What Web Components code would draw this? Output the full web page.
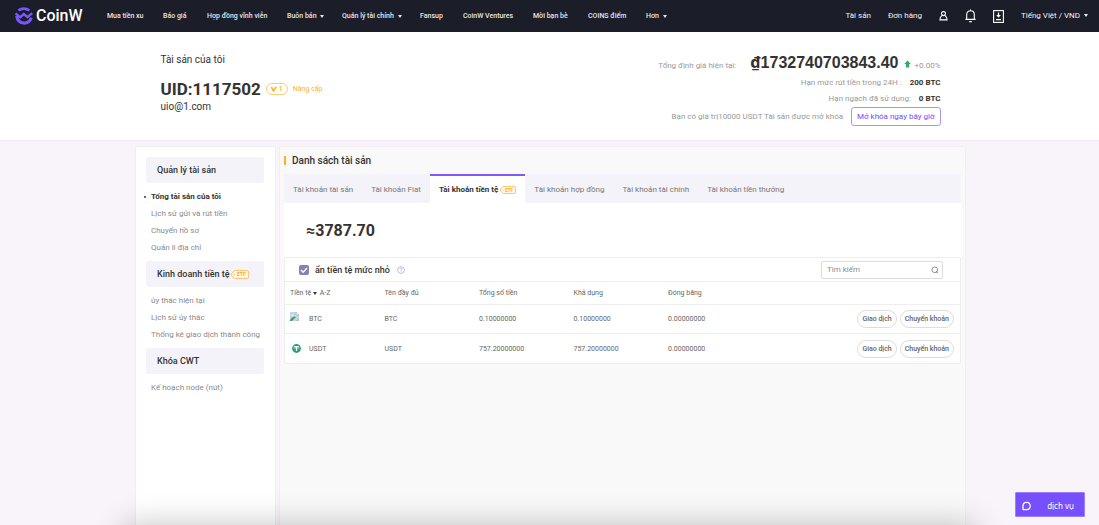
<!DOCTYPE html>
<html lang="vi">
<head>
<meta charset="utf-8">
<title>CoinW - Tài sản của tôi</title>
<style>
html{height:100%}
body{margin:0;min-height:100vh;display:flex;flex-direction:column;background:#f9f4f9;color:#333;font-family:Roboto,"Liberation Sans",sans-serif;font-size:8px}
main{flex:1;display:flex;flex-direction:column}
</style>
</head>
<body>
<cw-header></cw-header>
<main>
<cw-summary></cw-summary>
<cw-content>
  <cw-sidebar slot="side">
    <cw-group><span slot="title">Quản lý tài sản</span>
      <cw-link current>Tổng tài sản của tôi</cw-link><cw-link>Lịch sử gửi và rút tiền</cw-link><cw-link>Chuyển hồ sơ</cw-link><cw-link>Quản lí địa chỉ</cw-link>
    </cw-group>
    <cw-group><span slot="title">Kinh doanh tiền tệ</span><cw-etf slot="title"></cw-etf>
      <cw-link>ủy thác hiện tại</cw-link><cw-link>Lịch sử ủy thác</cw-link><cw-link>Thống kê giao dịch thành công</cw-link>
    </cw-group>
    <cw-group><span slot="title">Khóa CWT</span>
      <cw-link>Kế hoạch node (nút)</cw-link>
    </cw-group>
  </cw-sidebar>
  <cw-assets></cw-assets>
</cw-content>
</main>
<cw-shade></cw-shade>
<cw-service>dịch vụ</cw-service>
<script>
function define(name, html) {
  const t = document.createElement('template');
  t.innerHTML = html;
  customElements.define(name, class extends HTMLElement {
    constructor() {
      super();
      this.attachShadow({mode: 'open'}).append(t.content.cloneNode(true));
    }
  });
}

define('cw-caret', `<style>:host{display:inline-block;width:0;height:0;border:2px solid transparent;border-top:3px solid currentColor;border-bottom:0;margin-left:2px;vertical-align:middle}</style>`);

define('cw-etf', `<style>:host{display:inline-block;width:18px;height:9px}svg{display:block;width:100%;height:100%}</style>
<svg viewBox="0 0 18 9"><path d="M3.4 .6H16.6Q17.4 .6 17.4 1.4V7.6Q17.4 8.4 16.6 8.4H3.4L.6 5.6V3.4Z" fill="#fffaf0" stroke="#ffb84d" stroke-width=".9"/><circle cx="3.2" cy="4.5" r=".7" fill="#ffb84d"/><text x="6" y="6.3" font-family="Roboto,sans-serif" font-weight="700" font-size="5" fill="#ffa822">ETF</text></svg>`);

define('cw-header', `<style>
:host{display:flex;align-items:center;height:32px;background:#1b1d29;color:#fff;padding:0 11px 0 15px;box-sizing:border-box}
a{color:inherit;text-decoration:none}
.logo{display:flex;align-items:center;gap:3px;width:92px;flex:none;font:500 16px/20px Roboto,sans-serif}
.logo svg{width:18px;height:18px}
nav{display:grid;grid-template-columns:56px 44px 80px 55px 78px 43px 70px 55px 58px auto;font-weight:500;font-size:7px;line-height:10px;white-space:nowrap;color:#e6e6ea}
.tools{margin-left:auto;display:flex;align-items:center;gap:17px;font-size:8px;line-height:10px;white-space:nowrap;color:#f2f2f5}
button{all:unset;display:block}button svg{display:block}
</style>
<a class="logo" href="#"><svg viewBox="0 0 18 18" fill="none" stroke="#7b54ff"><path d="M3.4 3.4Q8.8 -.2 14.4 3.4" stroke-width="2.6"/><path d="M.6 6.4 5.2 10.4 8.8 6.8 12.4 10.2 17.2 6.2" stroke-width="2.4" stroke-linejoin="round"/><path d="M1.8 8.8C2.4 18 14.6 18.2 16.2 10.6" stroke-width="3.2"/></svg><span>CoinW</span></a>
<nav><a href="#">Mua tiền xu</a><a href="#">Báo giá</a><a href="#">Hợp đồng vĩnh viễn</a><a href="#">Buôn bán <cw-caret></cw-caret></a><a href="#">Quản lý tài chính <cw-caret></cw-caret></a><a href="#">Fansup</a><a href="#">CoinW Ventures</a><a href="#">Mời bạn bè</a><a href="#">COINS điểm</a><a href="#">Hơn <cw-caret></cw-caret></a></nav>
<div class="tools"><a href="#">Tài sản</a><a href="#">Đơn hàng</a>
<button aria-label="account"><svg width="9" height="12" viewBox="0 0 9 12" fill="none" stroke="#fff" stroke-width="1.1"><circle cx="4.5" cy="3.6" r="2"/><path d="M3.2 5.4C1.6 6.4 .9 7.8 .9 9.9H8.1C8.1 7.8 7.4 6.4 5.8 5.4"/></svg></button>
<button aria-label="notifications"><svg width="11" height="14" viewBox="0 0 11 14" fill="none" stroke="#fff" stroke-width="1.1"><path d="M5.5 .4V1.6M.4 10.4H10.6M1.7 10.2V5.6C1.7 .4 9.3 .4 9.3 5.6V10.2M4.2 12.6H6.8"/></svg></button>
<button aria-label="download"><svg width="11" height="13" viewBox="0 0 11 13" fill="none" stroke="#fff"><rect x=".6" y=".6" width="9.8" height="11.8" stroke-width="1.1"/><path d="M5.5 2.6V6.6M3 9.6H8" stroke-width="1.2"/><path d="M3.2 5H7.8L5.5 7.8Z" fill="#fff" stroke="none"/></svg></button>
<a href="#">Tiếng Việt / VND <cw-caret></cw-caret></a></div>`);

define('cw-summary', `<style>
:host{display:block;background:#fff;border-bottom:1px solid #eeeaf0}
.in{width:780px;max-width:100%;margin:0 auto;padding:20px 0 14px 2px;display:flex;justify-content:space-between;white-space:nowrap}
.title{font-size:10px;line-height:16px}
h1{margin:0;font-size:17px;line-height:22px;font-weight:700}
.id{display:flex;align-items:center;gap:5px;margin-top:10px}
.level{box-sizing:border-box;width:22px;height:12px;border:1px solid #ffcc70;border-radius:6px;color:#ffae23;font-size:7px;line-height:10px;display:flex;justify-content:center;align-items:center;gap:2px;font-weight:500}
.id a{color:#ffb02e;font-size:7px;text-decoration:none}
.mail{font-size:10px;line-height:14px}
.right{display:flex;flex-direction:column;align-items:flex-end;color:#999;font-size:8px}
.row{display:flex;align-items:center;height:16px}
.total{height:22px;align-items:baseline}
strong{color:#333;margin-left:8px;font-weight:700}
.total strong{font:700 16px/22px "Liberation Sans",sans-serif;margin:0 5px 0 14px}
.dong{font-family:"Noto Sans",sans-serif;line-height:1}
.total svg{margin-right:4px}
.last{height:20px}
button{font:8px/16px Roboto,sans-serif;height:19px;padding:1px 5px 0;margin-left:8px;border:1px solid #a895ff;border-radius:3px;background:#fff;color:#6f4bfa}
</style>
<div class="in"><div class="left"><div class="title">Tài sản của tôi</div><div class="id"><h1>UID:1117502</h1><span class="level"><svg width="6" height="6" viewBox="0 0 6 6" fill="none" stroke="#ffae23" stroke-width="1.5"><path d="M.5 1 2.4 5 5.3 .6"/></svg>1</span><a href="#">Nâng cấp</a></div><div class="mail">uio@1.com</div></div>
<div class="right"><div class="row total"><span>Tổng định giá hiện tại:</span><strong><span class="dong">₫</span>1732740703843.40</strong><svg width="7" height="8" viewBox="0 0 7 8"><path d="M3.5 .4 6.8 4H5V7.4H2V4H.2Z" fill="#2bb05c"/></svg><span>+0.00%</span></div>
<div class="row">Hạn mức rút tiền trong 24H : <strong>200 BTC</strong></div>
<div class="row">Hạn ngạch đã sử dụng: <strong>0 BTC</strong></div>
<div class="row last">Bạn có giá trị10000 USDT Tài sản được mở khóa<button>Mở khóa ngay bây giờ</button></div></div></div>`);

define('cw-content', `<style>
:host{flex:1;display:grid;grid-template-columns:141px minmax(0,1fr);gap:3px;width:831px;max-width:100%;margin:0 auto;padding:5px 0 0 2px}
</style><slot name="side"></slot><slot></slot>`);

define('cw-sidebar', `<style>:host{display:block;background:#fff;border:1px solid #f0edf3;border-bottom:0;padding:10px 11px 0 10px}</style><nav><slot></slot></nav>`);

define('cw-group', `<style>
:host{display:block}
.head{display:flex;align-items:center;height:26px;background:#f4f3f9;border-radius:2px;padding-left:11px;font-size:9px;font-weight:500;margin-bottom:5px;white-space:nowrap}
.head ::slotted(cw-etf){margin-left:1px}
.list{padding:0 0 5px 5px}
</style><div class="head"><slot name="title"></slot></div><div class="list"><slot></slot></div>`);

define('cw-link', `<style>
:host{display:block;line-height:17px;color:#8a8a8a;white-space:nowrap}
a{color:inherit;text-decoration:none;position:relative}
:host([current]){color:#333;font-weight:700}
:host([current]) a::before{content:"";position:absolute;left:-7px;top:4px;width:2px;height:2px;border-radius:50%;background:#333}
</style><a href="#"><slot></slot></a>`);

define('cw-tab', `<style>
:host{display:flex}
button{all:unset;display:flex;align-items:center;gap:2px;padding:0 9px;border-top:2px solid transparent;font-size:8px;color:#777;white-space:nowrap}
:host([selected]) button{background:#fff;border-color:#7b5cfa;color:#333;font-weight:700}
</style><button role="tab"><slot></slot></button>`);

define('cw-assets', `<style>
:host{display:block;background:#f9f9f9;border:1px solid #f1eff2;border-bottom:0;padding:0 4px}
h2{margin:0;display:flex;align-items:center;gap:6px;height:27px;font-size:10px;font-weight:500}
h2::before{content:"";width:2px;height:9px;background:#ffb027}
.tabs{display:flex;height:29px;background:#f4f3f9}
.sum{background:#fff;height:54px;line-height:56px;padding-left:22px;font-size:16px;font-weight:700}
.box{background:#fff;border:1px solid #eee;border-radius:0 0 2px 2px}
.bar{display:flex;align-items:center;justify-content:space-between;height:23px;border-bottom:1px solid #eee;padding:0 17px 0 14px}
label{display:flex;align-items:center;font-size:9px;font-weight:500}
.bar input[type=checkbox]{appearance:none;width:10px;height:10px;margin:0 6px 0 0;border-radius:2px;background:#8580b8 url("data:image/svg+xml,%3Csvg xmlns='http://www.w3.org/2000/svg' viewBox='0 0 10 10'%3E%3Cpath d='M2 5l2.2 2.2L8 3' fill='none' stroke='%23fff' stroke-width='1.4'/%3E%3C/svg%3E")}
.help{margin-left:7px}
.search{display:flex;align-items:center;box-sizing:border-box;width:122px;height:18px;border:1px solid #ddd;border-radius:2px;padding:0 3px 0 5px}
.search input{flex:1;min-width:0;border:0;outline:0;padding:0;background:none;font:8px Roboto,sans-serif}
.search input::placeholder{color:#8c8c8c}
table{width:100%;table-layout:fixed;border-collapse:collapse;font-size:7px;color:#666}
th,td{padding:0 0 0 5px;text-align:left;font-weight:400;white-space:nowrap}
th{height:22px}
td{height:28px;border-top:1px solid #eee}
tr:last-child td{height:29px}
.coin{display:flex;align-items:center}
.coin svg{width:13px;height:13px;margin-right:6px}
.coin .missing{align-self:flex-start;margin-top:-3px}
.act{display:flex;justify-content:flex-end;gap:3px;padding-right:6px}
.act button{font:500 7px/16px Roboto,sans-serif;color:#666;background:#fff;border:1px solid #ddd;border-radius:9px;height:18px;padding:0 4px}
th cw-caret{color:#333;margin:0 1px 0 0}
</style>
<h2>Danh sách tài sản</h2>
<div class="tabs" role="tablist"><cw-tab>Tài khoản tài sản</cw-tab><cw-tab>Tài khoản Fiat</cw-tab><cw-tab selected>Tài khoản tiền tệ <cw-etf style="width:16px;height:8px"></cw-etf></cw-tab><cw-tab>Tài khoản hợp đồng</cw-tab><cw-tab>Tài khoản tài chính</cw-tab><cw-tab>Tài khoản tiền thưởng</cw-tab></div>
<div class="sum">≈3787.70</div>
<div class="box"><div class="bar"><label><input type="checkbox" checked>ẩn tiền tệ mức nhỏ<svg class="help" width="8" height="8" viewBox="0 0 8 8" fill="none" stroke="#a79fe0" stroke-width=".7"><circle cx="4" cy="4" r="3.4"/><path d="M2.9 3.2C2.9 1.6 5.2 1.7 5.1 3.1 5 3.8 4 3.9 4 4.8M4 5.4V6.1"/></svg></label>
<div class="search"><input type="text" placeholder="Tìm kiếm" aria-label="Tìm kiếm"><svg width="8" height="8" viewBox="0 0 8 8" fill="none" stroke="#777" stroke-width=".8"><circle cx="3.8" cy="3.8" r="2.9"/><path d="M5 5.2 7 7.2"/></svg></div></div>
<table><colgroup><col style="width:14%"><col style="width:14%"><col style="width:14%"><col style="width:14%"><col style="width:14%"><col></colgroup>
<thead><tr><th>Tiền tệ <cw-caret></cw-caret> A-Z</th><th>Tên đầy đủ</th><th>Tổng số tiền</th><th>Khả dụng</th><th>Đóng băng</th><th></th></tr></thead>
<tbody><tr><td><div class="coin"><svg class="missing" viewBox="0 0 13 13"><path d="M0 1H6L9 4V7L5 10H0Z" fill="#c3d5ef"/><path d="M6 1V4H9Z" fill="#fff" stroke="#aaa" stroke-width=".6"/><path d="M0 9Q3 4 6 6L2 10H0Z" fill="#45a43d"/><path d="M9 7V10H5Z" fill="#bbb"/><path d="M1 4.5Q2.5 2.5 4 4.5Z" fill="#fff"/></svg>BTC</div></td><td>BTC</td><td>0.10000000</td><td>0.10000000</td><td>0.00000000</td><td><div class="act"><button>Giao dịch</button><button>Chuyển khoản</button></div></td></tr>
<tr><td><div class="coin"><svg viewBox="0 0 13 13"><circle cx="6.5" cy="6.5" r="6.2" fill="#fff" stroke="#eee" stroke-width=".4"/><circle cx="6.5" cy="6.5" r="4.4" fill="#24a17c"/><path d="M4.2 4.6H8.8M6.5 4.6V9" stroke="#fff" stroke-width="1.2"/><ellipse cx="6.5" cy="6" rx="2.8" ry=".8" fill="none" stroke="#fff" stroke-width=".4"/></svg>USDT</div></td><td>USDT</td><td>757.20000000</td><td>757.20000000</td><td>0.00000000</td><td><div class="act"><button>Giao dịch</button><button>Chuyển khoản</button></div></td></tr></tbody></table></div>`);

define('cw-shade', `<style>
:host{position:fixed;left:0;right:0;bottom:0;height:32px;overflow:hidden;pointer-events:none}
div{position:absolute;left:134px;right:134px;top:42px;height:20px;box-shadow:0 0 32px 10px rgba(0,0,0,.24)}
</style><div></div>`);

define('cw-service', `<style>
:host{position:fixed;right:14px;bottom:8px}
button{all:unset;box-sizing:border-box;display:flex;align-items:center;justify-content:space-between;width:70px;height:25px;padding:2px 10px 0 6px;background:#7650ff;border:1px solid #9a80ff;border-radius:1px;color:#fff;font:8px/12px "Noto Sans",sans-serif}
</style><button><svg width="9" height="10" viewBox="0 0 9 10" fill="none" stroke="#fff" stroke-width="1.3"><path d="M1 9V4.8A3.6 3.6 0 1 1 4.6 8.6H1"/></svg><slot></slot></button>`);
</script>
</body>
</html>
